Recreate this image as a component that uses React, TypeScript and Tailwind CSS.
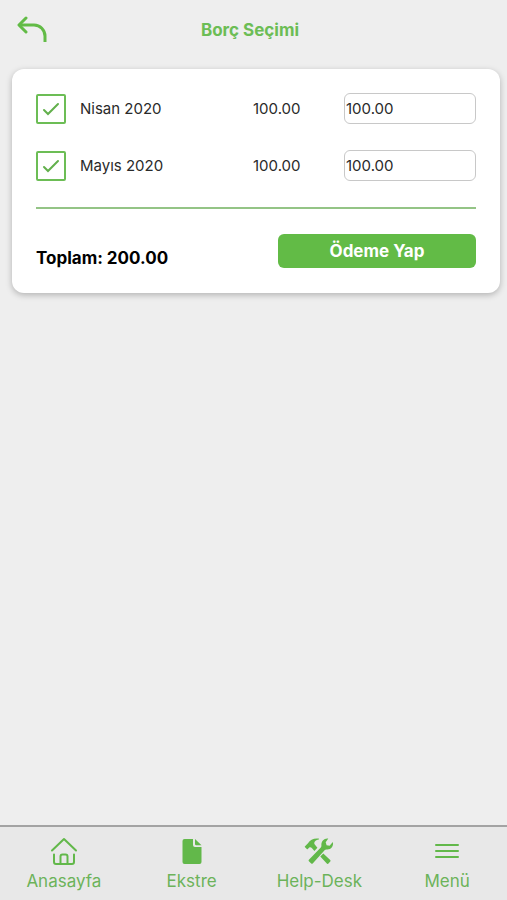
import React, { useState } from "react";

const initialDebts = [
  { id: "nisan", label: "Nisan 2020", amount: 100, payment: "100.00", selected: true },
  { id: "mayis", label: "Mayıs 2020", amount: 100, payment: "100.00", selected: true },
];

const BackIcon = () => (
  <svg width="30" height="28" viewBox="0 0 30 28" fill="none" stroke="currentColor" strokeWidth="3" strokeLinecap="round" strokeLinejoin="round">
    <path d="M9 2 2 9l7 7" />
    <path d="M2.500 9H17a11 11 0 0 1 11 11v6" strokeLinecap="butt" />
  </svg>
);

const HomeIcon = () => (
  <svg width="28" height="28" viewBox="0 0 28 28" fill="none" stroke="currentColor" strokeWidth="2" strokeLinecap="round" strokeLinejoin="round">
    <path d="M2 13.500 14 2l12 11.500" />
    <path d="M10.500 27V19.500a2 2 0 0 1 2-2h3a2 2 0 0 1 2 2V27" />
    <path d="M4 17.500V25a2 2 0 0 0 2 2h16a2 2 0 0 0 2-2v-7.500" />
  </svg>
);

const FileIcon = () => (
  <svg width="28" height="28" viewBox="0 0 28 28" fill="currentColor">
    <path d="M6.500 2H15v6a2 2 0 0 0 2 2h6.500v15a2 2 0 0 1-2 2h-15a2 2 0 0 1-2-2V4a2 2 0 0 1 2-2z" />
    <path d="M17 2v5a1.300 1.300 0 0 0 1.300 1.300h5.200z" />
  </svg>
);

const ToolsIcon = () => (
  <svg width="30" height="28" viewBox="0 0 30 28" fill="currentColor">
    <path d="M0.800 9.500 4 6.200C6 3 9.500 1 14.500 1.500c.8.100.8.700.1.900-2.600.7-4.100 1.800-4.300 3.300-.1 1 .3 1.700.9 2.400l2.200 2.600-3 3.200-2.600-2.900c-.9-.9-1.900-1-2.800-.3L3.800 12c-.3.300-.7.300-1 0L.8 10.100z" />
    <path d="m19.300 16.500 6.900 6.600c.5.500.5 1 .1 1.400l-2.100 2.200c-.4.400-.9.400-1.400-.1l-6.500-7z" />
    <path d="M28.800 5c1.200 4-1.900 7.900-6.200 7.500-.8-.1-1.500.2-2 .8L8.700 26.400c-.5.500-1 .5-1.500.1l-2.300-2.200c-.5-.5-.5-1 0-1.500L16.800 10.500c.5-.6.7-1.200.6-2C17 4.200 20.300 1 24.300 1.600l-2.600 3.600.9 3 3 .6z" />
  </svg>
);

const MenuIcon = () => (
  <svg width="28" height="28" viewBox="0 0 28 28" fill="none" stroke="currentColor" strokeWidth="2" strokeLinecap="round">
    <path d="M3 8h22M3 14h22M3 20h22" />
  </svg>
);

const navItems = [
  { label: "Anasayfa", href: "#anasayfa", icon: HomeIcon },
  { label: "Ekstre", href: "#ekstre", icon: FileIcon },
  { label: "Help-Desk", href: "#help-desk", icon: ToolsIcon },
  { label: "Menü", href: "#menu", icon: MenuIcon },
];

const App = () => {
  const [debts, setDebts] = useState(initialDebts);

  const total = debts
    .filter((debt) => debt.selected)
    .reduce((sum, debt) => sum + (parseFloat(debt.payment) || 0), 0);

  const toggle = (id: string) => {
    setDebts(debts.map((debt) => (debt.id === id ? { ...debt, selected: !debt.selected } : debt)));
  };

  const changePayment = (id: string, payment: string) => {
    setDebts(debts.map((debt) => (debt.id === id ? { ...debt, payment } : debt)));
  };

  const handleSubmit = (e: React.FormEvent) => {
    e.preventDefault();
  };

  return (
    <div className="flex min-h-screen flex-col bg-[#eeeeee] font-[Inter,sans-serif] text-[#2a2a2a]">
      <header className="grid grid-cols-[1fr_auto_1fr] items-center pt-4 pr-6 pb-[25px] pl-[17px]">
        <button type="button" aria-label="Geri" className="justify-self-start text-[#62bb46]">
          <BackIcon />
        </button>
        <h1 className="text-[17px] leading-7 font-bold text-[#6cbd55]">Borç Seçimi</h1>
      </header>

      <main className="flex-1">
        <form onSubmit={handleSubmit} className="mr-[7px] ml-3 rounded-xl bg-white px-6 pt-6 pb-[23px] shadow-[0_2px_6px_rgba(0,0,0,0.25)]">
          <div className="space-y-[26px]">
            {debts.map((debt) => (
              <div key={debt.id} className="grid grid-cols-[217fr_91fr_132fr] items-center text-[15px]">
                <label className="flex items-center gap-[14px]">
                  <span className="grid size-[30px] place-items-center">
                    <input
                      type="checkbox"
                      checked={debt.selected}
                      onChange={() => toggle(debt.id)}
                      className="peer col-start-1 row-start-1 size-[30px] appearance-none rounded-xs border-2 border-[#6cbd55] bg-white"
                    />
                    <svg
                      className="pointer-events-none invisible col-start-1 row-start-1 text-[#62b04c] peer-checked:visible"
                      width="18"
                      height="14"
                      viewBox="0 0 18 14"
                      fill="none"
                      stroke="currentColor"
                      strokeWidth="2"
                      strokeLinecap="round"
                    >
                      <path d="m2 8 4 4L16 2" />
                    </svg>
                  </span>
                  <span className="pt-0.5">{debt.label}</span>
                </label>
                <span className="pt-0.5">{debt.amount.toFixed(2)}</span>
                <input
                  type="text"
                  inputMode="decimal"
                  aria-label={`${debt.label} ödeme tutarı`}
                  value={debt.payment}
                  onChange={(e) => changePayment(debt.id, e.target.value)}
                  className="h-[31px] w-full rounded-md border border-[#c8c8c8] bg-white px-px"
                />
              </div>
            ))}
          </div>

          <hr className="mt-[26px] border-t-2 border-[#94c486]" />

          <div className="mt-[25px] flex items-center justify-between">
            <p className="pt-3 text-[17px] leading-6 font-bold text-black">Toplam: {total.toFixed(2)}</p>
            <button type="submit" className="h-[34px] w-[45%] self-start rounded-md bg-[#62bb46] pt-0.5 text-[17px] font-bold text-white">
              Ödeme Yap
            </button>
          </div>
        </form>
      </main>

      <nav className="grid grid-cols-4 gap-2 border-t-2 border-[#a3a3a3] bg-[#e8e8e8] pt-2.5 pb-[7px] pl-1 text-[17px] leading-6 text-[#6cb35a]">
        {navItems.map(({ label, href, icon: Icon }) => (
          <a key={label} href={href} className="flex flex-col items-center gap-1">
            <span className="text-[#62b84a]">
              <Icon />
            </span>
            {label}
          </a>
        ))}
      </nav>
    </div>
  );
};

export default App;
